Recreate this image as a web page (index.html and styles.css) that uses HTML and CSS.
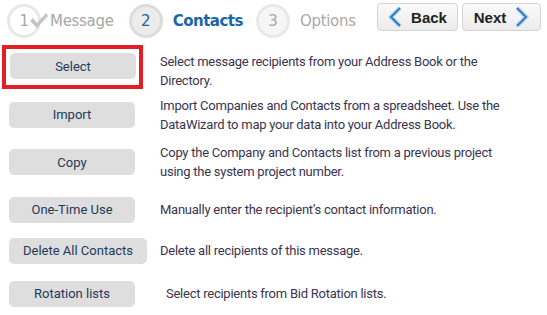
FILE: index.html
```html
<!DOCTYPE html>
<html lang="en">
<head>
    <meta charset="UTF-8">
    <title>Recipients - Contacts</title>
    <link rel="stylesheet" href="styles.css">
</head>
<body>
    <div class="wizard">
        <div class="steps">
            <div class="step done">
                <span class="step-num">1</span>
                <svg class="check" width="20" height="18" viewBox="0 0 20 18"><path d="M1 9 L4 6 L8 11 L17 1 L19 4 L8 16 Z" fill="#c4c4c4"/></svg>
                <span class="step-name">Message</span>
            </div>
            <div class="step current">
                <span class="step-num">2</span>
                <span class="step-name">Contacts</span>
            </div>
            <div class="step">
                <span class="step-num">3</span>
                <span class="step-name">Options</span>
            </div>
            <div class="nav-buttons">
                <button class="nav-btn back">
                    <svg width="14" height="20" viewBox="0 0 14 20"><path d="M12 1 L3 10 L12 19" fill="none" stroke="#bcd6ee" stroke-width="4.5"/><path d="M12 1 L3 10 L12 19" fill="none" stroke="#2f7dc4" stroke-width="2"/></svg>
                    Back
                </button>
                <button class="nav-btn next">
                    Next
                    <svg width="14" height="20" viewBox="0 0 14 20"><path d="M2 1 L11 10 L2 19" fill="none" stroke="#bcd6ee" stroke-width="4.5"/><path d="M2 1 L11 10 L2 19" fill="none" stroke="#2f7dc4" stroke-width="2"/></svg>
                </button>
            </div>
        </div>

        <div class="actions">
            <div class="action-row first">
                <div class="btn-cell highlighted"><button class="action-btn">Select</button></div>
                <p class="action-desc">Select message recipients from your Address Book or the Directory.</p>
            </div>
            <div class="action-row">
                <div class="btn-cell"><button class="action-btn">Import</button></div>
                <p class="action-desc">Import Companies and Contacts from a spreadsheet. Use the DataWizard to map your data into your Address Book.</p>
            </div>
            <div class="action-row">
                <div class="btn-cell"><button class="action-btn">Copy</button></div>
                <p class="action-desc">Copy the Company and Contacts list from a previous project using the system project number.</p>
            </div>
            <div class="action-row tight">
                <div class="btn-cell"><button class="action-btn">One-Time Use</button></div>
                <p class="action-desc">Manually enter the recipient’s contact information.</p>
            </div>
            <div class="action-row tight">
                <div class="btn-cell"><button class="action-btn wide">Delete All Contacts</button></div>
                <p class="action-desc">Delete all recipients of this message.</p>
            </div>
            <div class="action-row">
                <div class="btn-cell"><button class="action-btn">Rotation lists</button></div>
                <p class="action-desc indent">Select recipients from Bid Rotation lists.</p>
            </div>
        </div>
    </div>
</body>
</html>
```

FILE: styles.css
```css
body {
    margin: 0;
    background-color: #fff;
    font-family: Roboto, "Liberation Sans", sans-serif;
}
.wizard {
    padding: 4px 6px 0 7px;
}
.steps {
    display: flex;
    align-items: center;
    height: 34px;
}
.step {
    display: flex;
    align-items: center;
    font-family: "DejaVu Sans", sans-serif;
    font-size: 15px;
    letter-spacing: -0.3px;
    color: #a8a8a8;
    margin-right: 14px;
}
.step-num {
    width: 28px;
    height: 28px;
    border: 3px solid #e8e8e8;
    border-radius: 50%;
    background-color: #f6f6f6;
    display: flex;
    align-items: center;
    justify-content: center;
    color: #a8a8a8;
    margin-right: 10px;
}
.step.done {
    margin-right: 15px;
}
.step.done .step-num {
    margin-right: -12px;
    background-color: transparent;
}
.step.done .check {
    margin-right: 1px;
}
.step.current {
    margin-right: 13px;
}
.step.current .step-num {
    background-color: #ececec;
    border-color: #dcdcdc;
    color: #1b66a6;
}
.step.current .step-name {
    color: #1b66a6;
    font-weight: bold;
    letter-spacing: -0.5px;
}
.nav-buttons {
    display: flex;
    gap: 4px;
    margin-left: auto;
    align-self: flex-start;
    margin-top: -1px;
}
.nav-btn {
    display: flex;
    align-items: center;
    justify-content: center;
    gap: 9px;
    height: 28px;
    padding: 0;
    border: 1px solid #d4d4d4;
    border-radius: 4px;
    background: linear-gradient(#fafafa, #ececec);
    font-family: "Liberation Sans", sans-serif;
    font-weight: bold;
    font-size: 15px;
    color: #222;
}
.nav-btn.back {
    width: 81px;
}
.nav-btn.next {
    width: 79px;
}
.actions {
    margin-top: 7px;
}
.action-row {
    display: flex;
    align-items: center;
    height: 38px;
    margin-bottom: 9.5px;
}
.action-row.first {
    align-items: flex-start;
    height: 44px;
    margin-bottom: 6.5px;
}
.action-row.tight {
    margin-bottom: 3px;
}
.action-row.tight + .action-row.tight {
    margin-bottom: 5px;
}
.btn-cell {
    width: 136px;
    padding: 0 10px 0 2px;
    flex-shrink: 0;
    box-sizing: border-box;
}
.btn-cell.highlighted {
    border: 4px solid #e21f26;
    width: 141px;
    height: 44px;
    margin: 0 10px 0 -5px;
    padding: 4px 4px 6px;
}
.action-btn {
    width: 126px;
    height: 26px;
    border: none;
    border-radius: 5px;
    background-color: #dedede;
    font-family: Roboto, "Liberation Sans", sans-serif;
    font-size: 13px;
    color: #253a58;
}
.action-btn.wide {
    width: 138px;
}
.action-desc {
    margin: 0;
    padding-left: 17px;
    max-width: 345px;
    font-size: 13px;
    letter-spacing: -0.25px;
    line-height: 19px;
    color: #3a3450;
}
.first .action-desc {
    padding-left: 7px;
    margin-top: 7px;
}
.action-desc.indent {
    padding-left: 23px;
}
```
